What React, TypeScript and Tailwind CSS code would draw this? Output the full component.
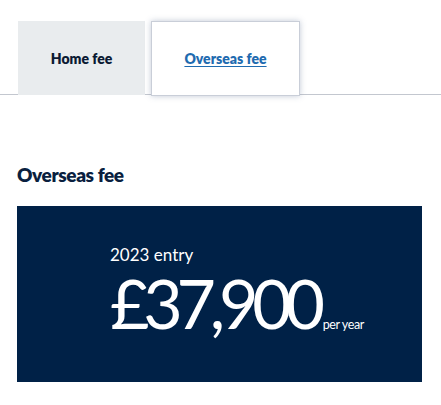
export default function App() {
  const font = { fontFamily: '"Lato", "Open Sans", sans-serif' };
  return (
    <div className="w-[441px] h-[405px] bg-white" style={font}>
      <div className="pt-[21px] border-b border-[#c3c7cf] flex pl-[18px] gap-[6px] h-[95px]">
        <div className="w-[127px] h-[74px] bg-[#e9ecee] flex items-center justify-center">
          <span className="text-[14px] font-extrabold text-[#0b1a33]">Home fee</span>
        </div>
        <div className="w-[149px] h-[75px] bg-white border border-[#c9ced8] shadow-[0_0_6px_rgba(120,135,165,0.45)] flex items-center justify-center relative">
          <span className="text-[14px] font-extrabold text-[#1f6bb0] underline underline-offset-2">Overseas fee</span>
        </div>
      </div>
      <div className="px-[17px] pt-[68px]">
        <h2 className="text-[19px] font-extrabold text-[#0a1f3f] leading-[24px] tracking-[-0.4px]">Overseas fee</h2>
        <div className="mt-[19px] w-[405px] h-[176px] bg-[#002147] pl-[93px] pt-[40px] text-white">
          <div className="text-[17px] leading-[18px]">2023 entry</div>
          <div className="flex items-baseline mt-[8px]">
            <span className="text-[68px] leading-[62px] tracking-[-6.2px]">£37,900</span>
            <span className="text-[12.5px] ml-[4px] tracking-[-0.4px]">per year</span>
          </div>
        </div>
      </div>
    </div>
  );
}
